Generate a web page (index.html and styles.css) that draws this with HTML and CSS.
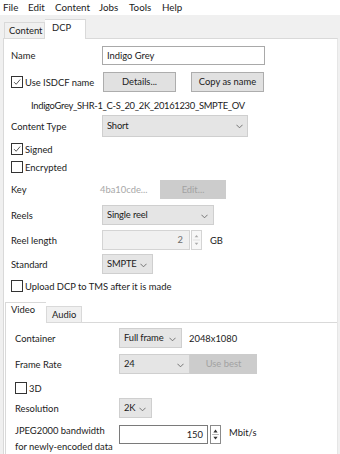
FILE: index.html
```html
<!DOCTYPE html>
<html>
<head>
<meta charset="utf-8">
<link rel="stylesheet" href="styles.css">
</head>
<body>
<div class="menubar">
  <span class="m-file">File</span><span class="m-edit">Edit</span><span class="m-content">Content</span><span class="m-jobs">Jobs</span><span class="m-tools">Tools</span><span class="m-help">Help</span>
</div>
<div class="tabstrip">
  <div class="tab">Content</div>
  <div class="tab active">DCP</div>
</div>
<div class="panel">
  <div class="row r-name">
    <div class="label">Name</div>
    <div class="input name-input">Indigo Grey</div>
  </div>
  <div class="row r-isdcf">
    <div class="label check-label"><span class="box checked"><svg viewBox="0 0 12 12"><path d="M2.5 6.2 L5 8.7 L9.8 3" fill="none" stroke="#333" stroke-width="1"/></svg></span>Use ISDCF name</div>
    <div class="btn details">Details...</div>
    <div class="btn copy">Copy as name</div>
  </div>
  <div class="row r-dcpname">IndigoGrey_SHR-1_C-S_20_2K_20161230_SMPTE_OV</div>
  <div class="row r-ctype">
    <div class="label">Content Type</div>
    <div class="select ctype">Short<svg class="chev" viewBox="0 0 8 5"><path d="M0.5 0.5 L4 4 L7.5 0.5" fill="none" stroke="#666" stroke-width="1"/></svg></div>
  </div>
  <div class="row r-signed">
    <div class="check-label"><span class="box checked"><svg viewBox="0 0 12 12"><path d="M2.5 6.2 L5 8.7 L9.8 3" fill="none" stroke="#333" stroke-width="1"/></svg></span>Signed</div>
  </div>
  <div class="row r-enc">
    <div class="check-label"><span class="box"></span>Encrypted</div>
  </div>
  <div class="row r-key">
    <div class="label">Key</div>
    <div class="keyval">4ba10cde...</div>
    <div class="btn disabled edit">Edit...</div>
  </div>
  <div class="row r-reels">
    <div class="label">Reels</div>
    <div class="select reels">Single reel<svg class="chev" viewBox="0 0 8 5"><path d="M0.5 0.5 L4 4 L7.5 0.5" fill="none" stroke="#666" stroke-width="1"/></svg></div>
  </div>
  <div class="row r-reellen">
    <div class="label">Reel length</div>
    <div class="input disabled-input reellen">2</div>
    <div class="spin disabled-spin"><svg viewBox="0 0 10 20"><path d="M3 7 L5 4.5 L7 7 Z" fill="#aaa"/><path d="M3 13 L5 15.5 L7 13 Z" fill="#aaa"/><path d="M1 10 H9" stroke="#ddd"/></svg></div>
    <div class="unit">GB</div>
  </div>
  <div class="row r-standard">
    <div class="label">Standard</div>
    <div class="select standard">SMPTE<svg class="chev" viewBox="0 0 8 5"><path d="M0.5 0.5 L4 4 L7.5 0.5" fill="none" stroke="#666" stroke-width="1"/></svg></div>
  </div>
  <div class="row r-upload">
    <div class="check-label"><span class="box"></span>Upload DCP to TMS after it is made</div>
  </div>
  <div class="subtabs">
    <div class="subtab active">Video</div>
    <div class="subtab">Audio</div>
  </div>
  <div class="subpanel">
    <div class="row v-container">
      <div class="vlabel">Container</div>
      <div class="select container">Full frame<svg class="chev" viewBox="0 0 8 5"><path d="M0.5 0.5 L4 4 L7.5 0.5" fill="none" stroke="#666" stroke-width="1"/></svg></div>
      <div class="res-text">2048x1080</div>
    </div>
    <div class="row v-rate">
      <div class="vlabel">Frame Rate</div>
      <div class="select rate">24<svg class="chev" viewBox="0 0 8 5"><path d="M0.5 0.5 L4 4 L7.5 0.5" fill="none" stroke="#666" stroke-width="1"/></svg></div>
      <div class="btn disabled usebest">Use best</div>
    </div>
    <div class="row v-3d">
      <div class="check-label"><span class="box"></span>3D</div>
    </div>
    <div class="row v-res">
      <div class="vlabel">Resolution</div>
      <div class="select resol">2K<svg class="chev" viewBox="0 0 8 5"><path d="M0.5 0.5 L4 4 L7.5 0.5" fill="none" stroke="#666" stroke-width="1"/></svg></div>
    </div>
    <div class="row v-bw">
      <div class="vlabel bwlabel">JPEG2000 bandwidth<br>for newly-encoded data</div>
      <div class="input bw">150</div>
      <div class="spin"><svg viewBox="0 0 10 20"><path d="M2.5 7.5 L5 4 L7.5 7.5 Z" fill="#333"/><path d="M2.5 12.5 L5 16 L7.5 12.5 Z" fill="#333"/><path d="M1 10 H9" stroke="#aaa"/></svg></div>
      <div class="unit">Mbit/s</div>
    </div>
  </div>
</div>
</body>
</html>
```
FILE: styles.css
```css
* { box-sizing: border-box; }
html, body { margin: 0; padding: 0; }
body {
  width: 340px;
  height: 454px;
  overflow: hidden;
  background: #f0f0f0;
  font-family: Lato, "Noto Sans", sans-serif;
  font-size: 9.4px;
  color: #1b1b1b;
  white-space: nowrap;
}
.menubar {
  height: 15px;
  background: #ffffff;
  display: flex;
  align-items: center;
  line-height: 15px;
  font-size: 9.8px;
}
.menubar span { display: block; flex: none; }
.m-file { margin-left: 3px; width: 25px; }
.m-edit { width: 27px; }
.m-content { width: 44px; }
.m-jobs { width: 30px; }
.m-tools { width: 33px; }
.tabstrip {
  height: 23px;
  display: flex;
  align-items: flex-end;
  padding-left: 4px;
  background: #f0f0f0;
}
.tab {
  flex: none;
  height: 16px;
  width: 41px;
  border: 1px solid #d9d9d9;
  border-bottom: none;
  background: #f0f0f0;
  padding-left: 4px;
  line-height: 15px;
}
.tab.active {
  height: 20px;
  width: 41px;
  background: #fff;
  border-left: none;
  padding-left: 7px;
  line-height: 15px;
  position: relative;
  top: 1px;
}
.panel {
  margin-left: 3px;
  margin-right: 2px;
  height: 416px;
  background: #fff;
  border-left: 1px solid #d9d9d9;
  border-top: 1px solid #d9d9d9;
  border-right: 1px solid #e6e6e6;
  padding-top: 6px;
}
.row {
  display: flex;
  align-items: center;
  padding-left: 7px;
}
.label { width: 91px; flex: none; }
.vlabel { width: 104px; flex: none; }
.input {
  height: 19px;
  border: 1px solid #a9a9a9;
  background: #fff;
  line-height: 17px;
  padding: 0 4px;
  flex: none;
}
.name-input { width: 163px; }
.check-label { display: flex; align-items: center; }
.box {
  width: 12px;
  height: 12px;
  border: 1px solid #333;
  background: #fff;
  margin-right: 2px;
  flex: none;
  display: block;
}
.box svg { display: block; width: 10px; height: 10px; }
.btn {
  height: 20px;
  background: #e1e1e1;
  border: 1px solid #adadad;
  text-align: center;
  line-height: 18px;
  flex: none;
}
.btn.disabled {
  background: #cccccc;
  border-color: #cccccc;
  color: #a2a2a2;
}
.r-name { height: 20px; }
.r-isdcf { height: 22px; margin-top: 6px; }
.r-isdcf .label { width: 92px; }
.details { width: 73px; }
.copy { width: 73px; margin-left: 15px; }
.r-dcpname { height: 18px; margin-top: 3px; padding-left: 27px; letter-spacing: -0.3px; }
.select {
  position: relative;
  height: 22px;
  background: #e5e5e5;
  border: 1px solid #cfcfcf;
  padding-left: 4px;
  line-height: 20px;
  letter-spacing: -0.15px;
  flex: none;
}
.chev {
  position: absolute;
  right: 5px;
  top: 8px;
  width: 7px;
  height: 5px;
}
.r-ctype { height: 22px; margin-top: 1px; }
.ctype { width: 146px; }
.ctype .chev { right: 4px; }
.r-signed { height: 18px; margin-top: 3px; }
.r-enc { height: 18px; }
.r-key { height: 20px; margin-top: 3px; }
.keyval { width: 60px; color: #a8a8a8; margin-left: -2px; flex: none; }
.edit { width: 66px; height: 19px; line-height: 17px; }
.r-reels { height: 20px; margin-top: 6px; }
.reels { width: 112px; height: 20px; line-height: 18px; }
.r-reellen { height: 20px; margin-top: 5px; }
.reellen {
  width: 88px;
  height: 20px;
  background: #f0f0f0;
  border-color: #d4d4d4;
  text-align: right;
  color: #6d6d6d;
  padding-right: 6px;
}
.spin {
  width: 11px;
  height: 20px;
  margin-left: 1px;
  border: 1px solid #d4d4d4;
  background: #f7f7f7;
  flex: none;
}
.spin svg { display: block; width: 9px; height: 18px; }
.unit { margin-left: 8px; }
.r-standard { height: 20px; margin-top: 4px; }
.standard { width: 51px; height: 20px; line-height: 18px; }
.r-upload { height: 18px; margin-top: 3px; }
.subtabs {
  display: flex;
  align-items: flex-end;
  height: 21px;
  margin-top: 6px;
  padding-left: 1px;
}
.subtab {
  flex: none;
  height: 16px;
  width: 36px;
  border: 1px solid #d9d9d9;
  border-bottom: none;
  background: #f0f0f0;
  padding-left: 5px;
  line-height: 15px;
}
.subtab.active {
  height: 21px;
  width: 41px;
  background: #fff;
  padding-left: 5px;
  line-height: 14px;
  border-right: none;
  position: relative;
  top: 1px;
}
.subpanel {
  margin-left: 1px;
  border-left: 1px solid #d9d9d9;
  border-top: 1px solid #d9d9d9;
  height: 140px;
  padding-top: 5px;
  padding-left: 2px;
}
.subpanel .row { padding-left: 7px; }
.v-container { height: 20px; }
.container { width: 63px; height: 20px; line-height: 18px; }
.res-text { margin-left: 7px; }
.v-rate { height: 20px; margin-top: 6px; }
.rate { width: 71px; height: 20px; line-height: 18px; }
.usebest { width: 67px; height: 20px; }
.v-3d { height: 18px; margin-top: 5px; }
.v-res { height: 20px; margin-top: 1px; }
.resol { width: 33px; height: 20px; line-height: 18px; }
.v-bw { height: 34px; margin-top: 4px; align-items: flex-start; }
.bwlabel { line-height: 16px; padding-top: 1px; }
.bw {
  width: 89px;
  margin-top: 3px;
  border-color: #7a7a7a;
  text-align: right;
  padding-right: 4px;
}
.v-bw .spin {
  margin-top: 3px;
  height: 19px;
  border-color: #8a8a8a;
  background: #fff;
  margin-left: 2px;
}
.v-bw .spin svg { height: 17px; }
.v-bw .unit { margin-top: 5px; margin-left: 8px; }
```
